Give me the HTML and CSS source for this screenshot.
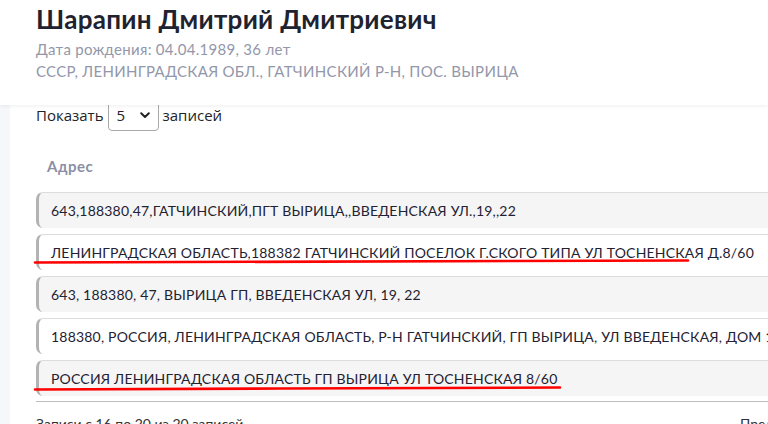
FILE: index.html
```html
<!DOCTYPE html>
<html lang="ru">
<head>
<meta charset="utf-8">
<link rel="stylesheet" href="styles.css">
</head>
<body>
<header class="head">
  <h1 class="name">Шарапин Дмитрий Дмитриевич</h1>
  <div class="meta">Дата рождения: 04.04.1989, 36 лет</div>
  <div class="meta">СССР, ЛЕНИНГРАДСКАЯ ОБЛ., ГАТЧИНСКИЙ Р-Н, ПОС. ВЫРИЦА</div>
</header>
<main class="page">
  <section class="card">
    <div class="length">
      <span>Показать</span>
      <div class="select"><span>5</span>
        <svg class="chev" width="10" height="7" viewBox="0 0 10 7"><path d="M1.2 1.3 L5 5 L8.8 1.3" fill="none" stroke="#222" stroke-width="2" stroke-linecap="round" stroke-linejoin="round"/></svg>
      </div>
      <span>записей</span>
    </div>
    <div class="th">Адрес</div>
    <div class="rows">
      <div class="row odd">643,188380,47,ГАТЧИНСКИЙ,ПГТ ВЫРИЦА,,ВВЕДЕНСКАЯ УЛ.,19,,22</div>
      <div class="row">ЛЕНИНГРАДСКАЯ ОБЛАСТЬ,188382 ГАТЧИНСКИЙ ПОСЕЛОК Г.СКОГО ТИПА УЛ ТОСНЕНСКАЯ Д.8/60</div>
      <div class="row odd">643, 188380, 47, ВЫРИЦА ГП, ВВЕДЕНСКАЯ УЛ, 19, 22</div>
      <div class="row">188380, РОССИЯ, ЛЕНИНГРАДСКАЯ ОБЛАСТЬ, Р-Н ГАТЧИНСКИЙ, ГП ВЫРИЦА, УЛ ВВЕДЕНСКАЯ, ДОМ 19</div>
      <div class="row odd">РОССИЯ ЛЕНИНГРАДСКАЯ ОБЛАСТЬ ГП ВЫРИЦА УЛ ТОСНЕНСКАЯ 8/60</div>
    </div>
    <div class="foot">
      <span class="info">Записи с 16 по 20 из 20 записей</span>
      <span>Предыдущая</span>
    </div>
  </section>
  <svg class="marks" width="768" height="424" viewBox="0 0 768 424">
    <path d="M35 268.5 C 200 267, 400 268, 688 266.5" fill="none" stroke="#f00" stroke-width="2.6" stroke-linecap="round"/>
    <path d="M35 395.5 C 200 394, 400 395, 560 393.5" fill="none" stroke="#f00" stroke-width="2.6" stroke-linecap="round"/>
  </svg>
</main>
</body>
</html>
```
FILE: styles.css
```css
html, body {
  margin: 0;
  padding: 0;
}
body {
  width: 768px;
  height: 424px;
  overflow: hidden;
  background: #f6f7fb;
  font-family: Lato, "Open Sans", sans-serif;
  color: #1f2233;
}
.head {
  position: relative;
  z-index: 2;
  background: #fff;
  height: 105px;
  box-sizing: border-box;
  padding: 2px 0 0 36px;
  box-shadow: 0 1px 4px rgba(0, 0, 0, 0.07);
}
.name {
  margin: 0 0 2px;
  font-size: 26px;
  font-weight: 700;
  letter-spacing: 0.3px;
  line-height: 34px;
  color: #1f2330;
}
.meta {
  font-size: 15px;
  letter-spacing: 0.3px;
  line-height: 22px;
  color: #9397aa;
}
.page {
  position: relative;
  padding-left: 10px;
}
.card {
  background: #fff;
  margin-top: -6px;
  padding: 0 0 0 26px;
  white-space: nowrap;
}
.length {
  display: flex;
  align-items: center;
  gap: 4px;
  font-family: "Open Sans", sans-serif;
  font-size: 15px;
  color: #212529;
  height: 32px;
}
.select {
  width: 51px;
  height: 31px;
  box-sizing: border-box;
  border: 1px solid #a8a8a8;
  border-radius: 4px;
  display: flex;
  align-items: center;
  justify-content: space-between;
  padding: 0 8px 0 8px;
  font-size: 15px;
}
.th {
  padding: 26px 0 0 11px;
  height: 49px;
  box-sizing: border-box;
  font-size: 15px;
  font-weight: 700;
  letter-spacing: 0.5px;
  color: #8b8fa5;
}
.rows {
  display: flex;
  flex-direction: column;
  gap: 6px;
  margin-top: 12px;
}
.row {
  height: 36px;
  box-sizing: border-box;
  display: flex;
  align-items: center;
  padding-left: 12px;
  background: #fff;
  border-top: 1px solid #dcdcdc;
  border-left: 3px solid #b3b3b3;
  border-radius: 7px 0 0 7px;
  font-size: 14px;
  letter-spacing: 0.2px;
  color: #1f2233;
  width: 900px;
}
.row.odd {
  background: #f5f5f5;
}
.foot {
  margin-top: 5px;
  border-top: 1px solid #bdbdbd;
  display: flex;
  width: 900px;
  padding-top: 13px;
  font-size: 14px;
  color: #333;
}
.info {
  flex: 0 0 704px;
}
.marks {
  position: absolute;
  left: 0;
  top: -105px;
  pointer-events: none;
}
```
